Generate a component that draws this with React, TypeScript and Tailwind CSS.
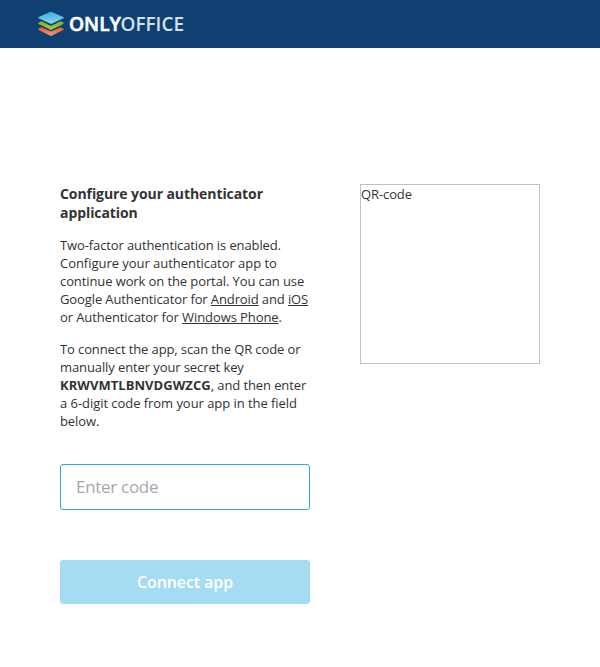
import React from "react";

function Logo() {
  return (
    <div className="flex items-center">
      <svg width="26" height="26" viewBox="0 0 26 26">
        <defs>
          <linearGradient id="red" x1="0" y1="0" x2="0" y2="1">
            <stop offset="0.2" stopColor="#e8603a" />
            <stop offset="1" stopColor="#f4a48a" />
          </linearGradient>
          <linearGradient id="green" x1="0" y1="0" x2="0" y2="1">
            <stop offset="0.2" stopColor="#86b71c" />
            <stop offset="1" stopColor="#a9d04c" />
          </linearGradient>
          <linearGradient id="blue" x1="0" y1="0" x2="0" y2="1">
            <stop offset="0" stopColor="#35ade0" />
            <stop offset="1" stopColor="#90d8f3" />
          </linearGradient>
        </defs>
        <path d="M0.8 18.9 Q-0.4 18.2 0.8 17.5 L3.6 16.2 L12 20.1 Q13 20.5 14 20.1 L22.4 16.2 L25.2 17.5 Q26.4 18.2 25.2 18.9 L14 24.6 Q13 25.1 12 24.6 Z" fill="url(#red)" />
        <path d="M0.8 13 Q-0.4 12.3 0.8 11.6 L3.6 10.3 L12 14.4 Q13 14.8 14 14.4 L22.4 10.3 L25.2 11.6 Q26.4 12.3 25.2 13 L14 18.6 Q13 19.1 12 18.6 Z" fill="url(#green)" />
        <path d="M0.7 7.3 Q-0.4 6.7 0.7 6.1 L12 0.9 Q13 0.5 14 0.9 L25.3 6.1 Q26.4 6.7 25.3 7.3 L14 12.6 Q13 13.1 12 12.6 Z" fill="url(#blue)" />
      </svg>
      <svg width="140" height="32" viewBox="0 -3 140 32" className="ml-[5px] overflow-visible" fontFamily="'Open Sans', sans-serif" fontSize="20">
        <text x="0" y="20.3" fontWeight="600" fill="#fff" stroke="#fff" strokeWidth="0.6" textLength="52" lengthAdjust="spacingAndGlyphs">ONLY</text>
        <text x="51.5" y="20.3" fontWeight="600" fill="#d3e2ea" textLength="63.5" lengthAdjust="spacingAndGlyphs">OFFICE</text>
      </svg>
    </div>
  );
}

export default function App() {
  return (
    <div className="min-h-[667px] bg-white font-['Open_Sans',sans-serif] text-[13px] leading-[18px] text-[#333]">
      <header className="flex h-12 items-center bg-[#0f4071] pl-[38px]">
        <Logo />
      </header>
      <main className="flex gap-[50px] pl-[60px] pt-[136px]">
        <section className="w-[250px]">
          <h1 className="text-[14px] font-bold leading-[19px] tracking-[-0.08px]">Configure your authenticator application</h1>
          <p className="mt-[14px] whitespace-nowrap">
            <span className="tracking-[-0.11px]">Two-factor authentication is enabled.</span><br />
            <span className="tracking-[-0.04px]">Configure your authenticator app to</span><br />
            <span className="tracking-[-0.1px]">continue work on the portal. You can use</span><br />
            <span className="tracking-[-0.11px]">Google Authenticator for <a className="underline">Android</a> and <a className="underline">iOS</a></span><br />
            <span className="tracking-[-0.09px]">or Authenticator for <a className="underline">Windows Phone</a>.</span>
          </p>
          <p className="mt-[14px] whitespace-nowrap">
            <span className="tracking-[-0.11px]">To connect the app, scan the QR code or</span><br />
            <span className="tracking-[-0.1px]">manually enter your secret key</span><br />
            <b className="tracking-[0.05px]">KRWVMTLBNVDGWZCG</b><span className="tracking-[-0.1px]">, and then enter</span><br />
            <span className="tracking-[-0.05px]">a 6-digit code from your app in the field</span><br />
            <span className="tracking-[-0.1px]">below.</span>
          </p>
          <input placeholder="Enter code" className="mt-[34px] block h-[46px] w-full rounded-[3px] border border-[#2da7db] px-[15px] pb-[2px] text-[17px] tracking-[-0.3px] placeholder:text-[#a3a9ae] focus:outline-none" />
          <button className="mt-[50px] block h-11 w-full rounded-[3px] bg-[#a6dcf2] text-[16px] font-semibold tracking-[-0.1px] text-white">Connect app</button>
        </section>
        <div className="h-[180px] w-[180px] border border-[#c0c0c0] tracking-[-0.1px]">QR-code</div>
      </main>
    </div>
  );
}
